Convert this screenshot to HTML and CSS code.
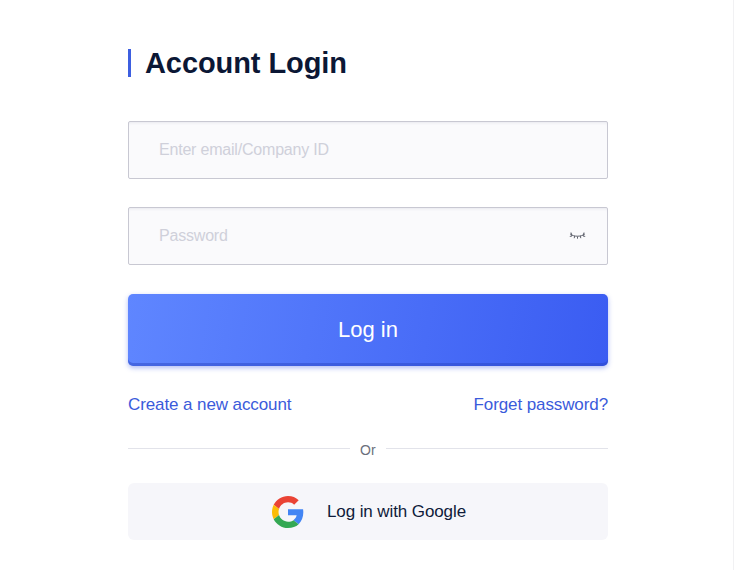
FILE: index.html
```html
<!DOCTYPE html>
<html lang="en">
<head>
<meta charset="utf-8">
<title>Account Login</title>
<link rel="stylesheet" href="styles.css">
</head>
<body>
<main class="panel">
  <h1 class="title">Account Login</h1>
  <form class="form">
    <div class="field"><input class="input" type="text" placeholder="Enter email/Company ID"></div>
    <div class="field">
      <input class="input" type="password" placeholder="Password">
      <svg class="eye" width="18" height="12" viewBox="0 0 18 12" fill="none" stroke="#5f626d" stroke-width="1" aria-hidden="true">
        <path d="M1 2.800C4.500 6 12.500 6 16 2.800"/>
        <path d="M2 1.500l1 3.500-2.200.4M15 1.500l-1 3.500 2.200.4M5.700 5l-.5 2.200M11.300 5l.5 2.200M8.500 5.500v2.200"/>
      </svg>
    </div>
    <button class="login" type="button">Log in</button>
  </form>
  <div class="links">
    <a class="link" href="#">Create a new account</a>
    <a class="link" href="#">Forget password?</a>
  </div>
  <div class="divider"><span class="rule"></span><span class="or">Or</span><span class="rule"></span></div>
  <button class="google" type="button">
    <svg class="g-logo" width="32" height="32" viewBox="0 0 48 48" aria-hidden="true">
      <path fill="#EA4335" d="M24 9.500c3.540 0 6.710 1.220 9.210 3.600l6.850-6.850C35.900 2.380 30.470 0 24 0 14.620 0 6.510 5.380 2.560 13.220l7.980 6.190C12.430 13.720 17.740 9.500 24 9.500z"/>
      <path fill="#4285F4" d="M46.980 24.550c0-1.570-.15-3.090-.38-4.550H24v9.020h12.940c-.58 2.960-2.260 5.480-4.780 7.180l7.730 6c4.510-4.180 7.090-10.360 7.090-17.650z"/>
      <path fill="#FBBC05" d="M10.530 28.590c-.48-1.450-.76-2.990-.76-4.590s.27-3.140.76-4.590l-7.980-6.190C.92 16.460 0 20.120 0 24c0 3.880.92 7.540 2.560 10.780l7.970-6.190z"/>
      <path fill="#34A853" d="M24 48c6.480 0 11.930-2.130 15.890-5.810l-7.730-6c-2.150 1.450-4.920 2.300-8.160 2.300-6.260 0-11.570-4.220-13.470-9.910l-7.980 6.190C6.510 42.620 14.620 48 24 48z"/>
    </svg>
    <span>Log in with Google</span>
  </button>
</main>
</body>
</html>
```
FILE: styles.css
```css
* { box-sizing: border-box; }
html, body { margin: 0; height: 100%; }
body {
  background: #fff;
  font-family: "Liberation Sans", Arial, sans-serif;
  border-right: 1px solid #f1f1f3;
  overflow: hidden;
}
.panel {
  width: 480px;
  margin-left: 128px;
  padding-top: 49px;
}
.title {
  margin: 0 0 44px;
  height: 28px;
  line-height: 28px;
  padding-left: 14px;
  border-left: 3px solid #3d5fe0;
  font-size: 29px;
  font-weight: 700;
  letter-spacing: -.08px;
  color: #0b1735;
}
.form { display: flex; flex-direction: column; gap: 28px; }
.field { position: relative; height: 58px; }
.input {
  display: block;
  width: 100%;
  height: 100%;
  padding: 0 30px;
  border: 1px solid #c8c8d2;
  border-radius: 2px;
  background: #fafafc;
  box-shadow: inset 0 3px 3px -2px #e8e8ee;
  font: 16px "Liberation Sans", Arial, sans-serif;
  letter-spacing: -.2px;
  outline: none;
}
.input::placeholder { color: #cfd0da; opacity: 1; }
.eye { position: absolute; top: 24px; right: 21px; }
.login {
  height: 72px;
  margin-top: 1px;
  border: 0;
  border-radius: 5px;
  background: linear-gradient(100deg, #5f86ff 0%, #3a5cf2 100%);
  box-shadow: inset 0 -3px 0 rgba(40, 66, 190, .45), 0 2px 5px rgba(60, 90, 230, .4);
  color: #fff;
  font: 22px "Liberation Sans", Arial, sans-serif;
}
.links {
  display: flex;
  justify-content: space-between;
  margin-top: 29px;
  line-height: 20px;
}
.link { color: #3b5bdb; font-size: 17px; letter-spacing: -.1px; text-decoration: none; }
.divider {
  display: flex;
  align-items: center;
  margin-top: 25px;
  height: 20px;
}
.rule { flex: 1; height: 1px; background: #e2e3ea; margin-top: -4px; }
.or { padding: 0 10px; color: #6b6f7c; font-size: 14px; letter-spacing: .3px; }
.google {
  display: flex;
  align-items: center;
  justify-content: center;
  gap: 23px;
  width: 100%;
  height: 57px;
  margin-top: 23px;
  padding: 0 0 0 2px;
  border: 0;
  border-radius: 6px;
  background: #f6f6fa;
  color: #0f1b3a;
  font: 17px "Liberation Sans", Arial, sans-serif;
  letter-spacing: -.1px;
}
```
